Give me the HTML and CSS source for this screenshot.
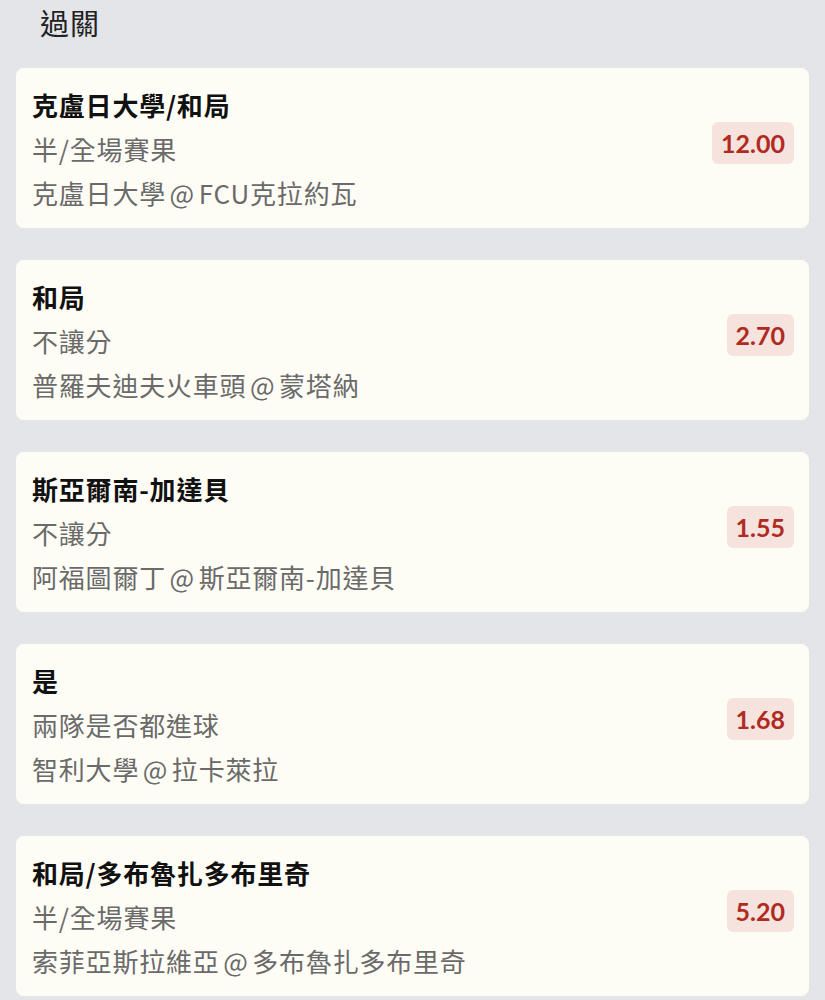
FILE: index.html
```html
<!DOCTYPE html>
<html lang="zh-Hant">
<head>
    <meta charset="UTF-8">
    <meta name="viewport" content="width=device-width, initial-scale=1.0">
    <title>過關</title>
    <link rel="stylesheet" href="styles.css">
</head>
<body>
    <h1 class="page-title">過關</h1>

    <div class="bet-list">
        <div class="bet-card">
            <div class="bet-info">
                <div class="bet-pick">克盧日大學/和局</div>
                <div class="bet-market">半/全場賽果</div>
                <div class="bet-match">克盧日大學 @ FCU克拉約瓦</div>
            </div>
            <span class="bet-odds">12.00</span>
        </div>

        <div class="bet-card">
            <div class="bet-info">
                <div class="bet-pick">和局</div>
                <div class="bet-market">不讓分</div>
                <div class="bet-match">普羅夫迪夫火車頭 @ 蒙塔納</div>
            </div>
            <span class="bet-odds">2.70</span>
        </div>

        <div class="bet-card">
            <div class="bet-info">
                <div class="bet-pick">斯亞爾南-加達貝</div>
                <div class="bet-market">不讓分</div>
                <div class="bet-match">阿福圖爾丁 @ 斯亞爾南-加達貝</div>
            </div>
            <span class="bet-odds">1.55</span>
        </div>

        <div class="bet-card">
            <div class="bet-info">
                <div class="bet-pick">是</div>
                <div class="bet-market">兩隊是否都進球</div>
                <div class="bet-match">智利大學 @ 拉卡萊拉</div>
            </div>
            <span class="bet-odds">1.68</span>
        </div>

        <div class="bet-card">
            <div class="bet-info">
                <div class="bet-pick">和局/多布魯扎多布里奇</div>
                <div class="bet-market">半/全場賽果</div>
                <div class="bet-match">索菲亞斯拉維亞 @ 多布魯扎多布里奇</div>
            </div>
            <span class="bet-odds">5.20</span>
        </div>
    </div>
</body>
</html>
```

FILE: styles.css
```css
body {
    margin: 0;
    padding: 0;
    background-color: #e4e5e8;
    font-family: "Noto Sans CJK TC", "Noto Sans", sans-serif;
    color: #1a1a1a;
}
.page-title {
    margin: 0;
    height: 68px;
    padding-left: 40px;
    font-size: 29px;
    font-weight: 400;
    line-height: 44px;
    letter-spacing: 1px;
    color: #222;
}
.bet-list {
    display: flex;
    flex-direction: column;
    gap: 32px;
    padding: 0 16px;
}
.bet-card {
    display: flex;
    align-items: center;
    justify-content: space-between;
    height: 160px;
    box-sizing: border-box;
    padding: 14px 15px 13px 16px;
    background-color: #fefdf5;
    border-radius: 8px;
}
.bet-info {
    display: flex;
    flex-direction: column;
}
.bet-pick,
.bet-market,
.bet-match {
    font-size: 26px;
    line-height: 44px;
    letter-spacing: 0.8px;
    white-space: nowrap;
}
.bet-pick {
    font-weight: 700;
    color: #111;
}
.bet-market,
.bet-match {
    color: #6a6a6a;
}
.bet-match {
    word-spacing: -3px;
}
.bet-odds {
    display: inline-flex;
    align-items: center;
    height: 42px;
    padding: 0 9px;
    margin-bottom: 12px;
    border-radius: 6px;
    background-color: #f6e3de;
    color: #b02a22;
    font-family: Lato, "Liberation Sans", sans-serif;
    font-weight: 700;
    font-size: 25px;
}
```
